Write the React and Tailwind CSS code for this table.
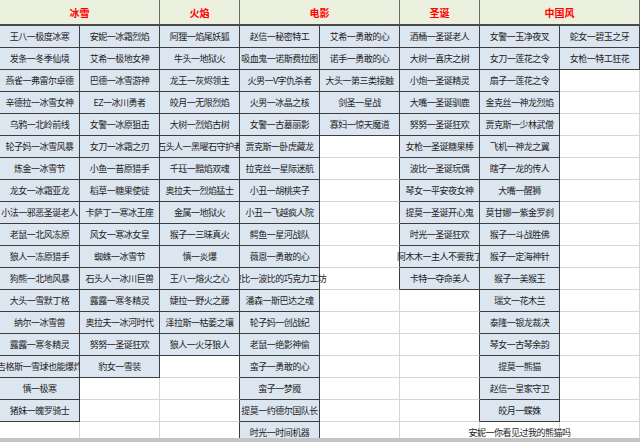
import React from 'react';

const columns = [
  ['王八一极度冰寒', '发条一冬季仙境', '燕雀一弗雷尔卓德', '辛德拉一冰雪女神', '乌鸦一北岭前线', '轮子妈一冰雪风暴', '炼金一冰雪节', '龙女一冰霜亚龙', '小法一邪恶圣诞老人', '老鼠一北风冻原', '狼人一冻原猎手', '狗熊一北地风暴', '大头一雪默丁格', '纳尔一冰雪兽', '露露一寒冬精灵', '吉格斯一雪球也能爆炸', '慎一极寒', '猪妹一魄罗骑士', ''],
  ['安妮一冰霜烈焰', '艾希一极地女神', '巴德一冰雪游神', 'EZ一冰川勇者', '女警一冰原狙击', '女刀一冰霜之刃', '小鱼一苔原猎手', '稻草一糖果使徒', '卡萨丁一寒冰王座', '风女一寒冰女皇', '蜘蛛一冰雪节', '石头人一冰川巨兽', '露露一寒冬精灵', '奥拉夫一冰河时代', '努努一圣诞狂欢', '豹女一雪装', '', '', ''],
  ['阿狸一焰尾妖狐', '牛头一地狱火', '龙王一灰烬领主', '皎月一无限烈焰', '大树一烈焰古树', '石头人一黑曜石守护者', '千珏一黯焰双魂', '奥拉夫一烈焰猛士', '金属一地狱火', '猴子一三昧真火', '慎一炎爆', '王八一熔火之心', '婕拉一野火之藤', '泽拉斯一枯萎之壤', '狼人一火牙狼人', '', '', '', ''],
  ['赵信一秘密特工', '吸血鬼一诺斯费拉图', '火男一V字仇杀者', '火男一冰晶之核', '女警一古墓丽影', '贾克斯一卧虎藏龙', '拉克丝一星际迷航', '小丑一胡桃夹子', '小丑一飞越疯人院', '鳄鱼一星河战队', '薇恩一勇敢的心', '波比一波比的巧克力工坊', '潘森一斯巴达之魂', '轮子妈一创战纪', '老鼠一绝影神偷', '蛮子一勇敢的心', '蛮子一梦魇', '提莫一约德尔国队长', '时光一时间机器'],
  ['艾希一勇敢的心', '诺手一勇敢的心', '大头一第三类接触', '剑圣一星战', '寡妇一惊天魔道', '', '', '', '', '', '', '', '', '', '', '', '', '', ''],
  ['酒桶一圣诞老人', '大树一喜庆之树', '小炮一圣诞精灵', '大嘴一圣诞驯鹿', '努努一圣诞狂欢', '女枪一圣诞糖果棒', '波比一圣诞玩偶', '琴女一平安夜女神', '提莫一圣诞开心鬼', '时光一圣诞狂欢', '阿木木一主人不要我了', '卡特一夺命美人', '', '', '', '', '', '', ''],
  ['女警一玉净夜叉', '女刀一莲花之令', '扇子一莲花之令', '金克丝一神龙烈焰', '贾克斯一少林武僧', '飞机一神龙之翼', '瞎子一龙的传人', '大嘴一醒狮', '莫甘娜一紫金罗刹', '猴子一斗战胜佛', '猴子一定海神针', '猴子一美猴王', '瑞文一花木兰', '泰隆一银龙裁决', '琴女一古琴余韵', '提莫一熊猫', '赵信一皇家守卫', '皎月一蝶姝', '安妮一你看见过我的熊猫吗'],
  ['蛇女一碧玉之牙', '女枪一特工狂花', '', '', '', '', '', '', '', '', '', '', '', '', '', '', '', '', ''],
];

// cells whose text spills past the cell edge, and which side stays clipped
const spill = {
  '3-11': 'left',
  '5-10': 'right',
  '6-18': 'free',
};
// filled but not shaded
const plain = new Set(['6-18']);

const headers = [
  { label: '冰雪', span: 'col-span-2' },
  { label: '火焰', span: 'col-span-1' },
  { label: '电影', span: 'col-span-2' },
  { label: '圣诞', span: 'col-span-1' },
  { label: '中国风', span: 'col-span-2' },
];

const ROWS = 19;

function isBlue(c, r) {
  if (c > 7 || r >= ROWS) return false;
  const t = columns[c][r];
  return !!t && !plain.has(`${c}-${r}`);
}

function Cell({ c, r }) {
  const text = columns[c][r];
  const blue = isBlue(c, r);
  const darkR = blue || isBlue(c + 1, r);
  const darkB = blue || isBlue(c, r + 1);
  const mode = spill[`${c}-${r}`];

  let clip = 'overflow-hidden';
  if (mode === 'left') clip = 'relative z-10 [clip-path:inset(0_-200px_0_0)]';
  if (mode === 'right') clip = 'relative z-10 [clip-path:inset(0_0_0_-200px)]';
  if (mode === 'free') clip = 'relative z-10';

  return (
    <div
      className={`flex items-center justify-center whitespace-nowrap border-r border-b ${
        darkR ? 'border-r-[#3d3d3d]' : 'border-r-[#d6d6d6]'
      } ${darkB ? 'border-b-[#3d3d3d]' : 'border-b-[#d6d6d6]'} ${
        blue ? 'bg-[#dce6f1]' : 'bg-white'
      } ${clip}`}
    >
      <span className="text-[9px] tracking-[-0.5px] leading-none text-[#1c1c1c]">{text}</span>
    </div>
  );
}

export default function App() {
  const cells = [];
  for (let r = 0; r < ROWS; r++) {
    for (let c = 0; c < 8; c++) {
      cells.push(<Cell key={`${c}-${r}`} c={c} r={r} />);
    }
  }

  return (
    <div
      className="flex h-[442px] w-[640px] flex-col overflow-hidden bg-white"
      style={{ fontFamily: '"Noto Sans CJK SC", "Noto Sans", sans-serif' }}
    >
      <div className="flex-1 overflow-hidden">
        {/* header band */}
        <div className="grid h-[26px] grid-cols-[repeat(8,80px)] border-b-2 border-[#4a4a4a] bg-[#ebf1de]">
          {headers.map((h) => (
            <div
              key={h.label}
              className={`${h.span} flex items-center justify-center border-r border-[#6b6b6b] text-[10px] font-bold text-[#ff0000]`}
            >
              {h.label}
            </div>
          ))}
        </div>

        <div className="grid grid-cols-[repeat(8,80px)] auto-rows-[22px]">{cells}</div>
      </div>
      <div className="h-[4px] bg-[#c4c4c4]" />
    </div>
  );
}
